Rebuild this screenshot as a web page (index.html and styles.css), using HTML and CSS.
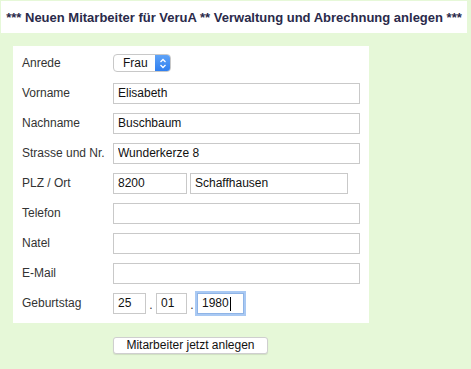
FILE: index.html
```html
<!DOCTYPE html>
<html lang="de">
<head>
  <meta charset="UTF-8">
  <title>Neuer Mitarbeiter</title>
  <link rel="stylesheet" href="styles.css">
</head>
<body>
  <header class="title-bar">
    <h1>*** Neuen Mitarbeiter für VeruA ** Verwaltung und Abrechnung anlegen ***</h1>
  </header>
  <form class="employee-form">
    <div class="form-box">
      <div class="row">
        <label>Anrede</label>
        <div class="select">
          <span class="select-value">Frau</span>
          <span class="select-arrows">
            <svg width="8" height="11" viewBox="0 0 8 11"><path d="M1.5 4 L4 1.5 L6.5 4 M1.5 7 L4 9.5 L6.5 7" fill="none" stroke="#fff" stroke-width="1.3"/></svg>
          </span>
        </div>
      </div>
      <div class="row">
        <label>Vorname</label>
        <input class="field" type="text" value="Elisabeth">
      </div>
      <div class="row">
        <label>Nachname</label>
        <input class="field" type="text" value="Buschbaum">
      </div>
      <div class="row">
        <label>Strasse und Nr.</label>
        <input class="field" type="text" value="Wunderkerze 8">
      </div>
      <div class="row">
        <label>PLZ / Ort</label>
        <div class="group">
          <input class="field plz" type="text" value="8200">
          <input class="field ort" type="text" value="Schaffhausen">
        </div>
      </div>
      <div class="row">
        <label>Telefon</label>
        <input class="field" type="text">
      </div>
      <div class="row">
        <label>Natel</label>
        <input class="field" type="text">
      </div>
      <div class="row">
        <label>E-Mail</label>
        <input class="field" type="text">
      </div>
      <div class="row">
        <label>Geburtstag</label>
        <div class="group date">
          <input class="field day" type="text" value="25">
          <span class="dot">.</span>
          <input class="field month" type="text" value="01">
          <span class="dot">.</span>
          <span class="year-wrap"><input class="field year" type="text" value="1980"></span>
        </div>
      </div>
    </div>
    <div class="actions">
      <button type="button" class="submit-btn">Mitarbeiter jetzt anlegen</button>
    </div>
  </form>
</body>
</html>
```

FILE: styles.css
```css
body {
  margin: 0;
  padding: 1px 0 0 1px;
  background-color: #e6f8d8;
  font-family: "Liberation Sans", Arial, sans-serif;
  color: #333;
  height: 368px;
}
.title-bar {
  width: 466px;
  height: 32px;
  background: white;
  display: flex;
  align-items: center;
  justify-content: center;
}
.title-bar h1 {
  margin: 0;
  font-size: 13px;
  font-weight: bold;
  color: #2a2a4a;
  white-space: nowrap;
}
.employee-form {
  margin: 13px 0 0 12px;
}
.form-box {
  width: 338px;
  background: white;
  padding: 2px 9px 5px 9px;
}
.row {
  display: flex;
  align-items: center;
  height: 30px;
}
.row label {
  width: 91px;
  font-size: 12px;
  color: #333;
}
.field {
  box-sizing: border-box;
  width: 247px;
  height: 21px;
  border: 1px solid #c9c9c9;
  padding: 0 4px;
  margin: 0;
  font-family: "Liberation Sans", Arial, sans-serif;
  font-size: 12px;
  color: #111;
  background: white;
  outline: none;
}
.group {
  display: flex;
  align-items: center;
}
.plz {
  width: 74px;
  margin-right: 3px;
}
.ort {
  width: 158px;
}
.day {
  width: 33px;
}
.month {
  width: 31px;
}
.year {
  width: 47px;
  border-color: #8fb4e6;
  box-shadow: 0 0 0 2px #a9c9f3;
}
.year-wrap {
  position: relative;
}
.year-wrap::after {
  content: "";
  position: absolute;
  left: 33px;
  top: 4px;
  width: 1px;
  height: 14px;
  background: #000;
}
.dot {
  width: 10px;
  text-align: center;
  font-size: 12px;
  color: #333;
  padding-top: 3px;
}
.select {
  display: flex;
  width: 58px;
  height: 18px;
  box-sizing: border-box;
  border: 1px solid #c8c8c8;
  border-radius: 4px;
  overflow: hidden;
  font-size: 12px;
  color: #111;
}
.select-value {
  flex: 1;
  padding-left: 9px;
  line-height: 16px;
}
.select-arrows {
  width: 15px;
  background: linear-gradient(#5fa3f7, #2f7ff0);
  display: flex;
  align-items: center;
  justify-content: center;
}
.actions {
  padding: 12px 0 0 100px;
}
.submit-btn {
  width: 155px;
  height: 17px;
  padding: 0;
  border: 1px solid #cfcfcf;
  border-radius: 3px;
  background: white;
  font-family: "Liberation Sans", Arial, sans-serif;
  font-size: 12px;
  color: #111;
  box-shadow: 0 1px 1px rgba(0, 0, 0, 0.1);
}
```
